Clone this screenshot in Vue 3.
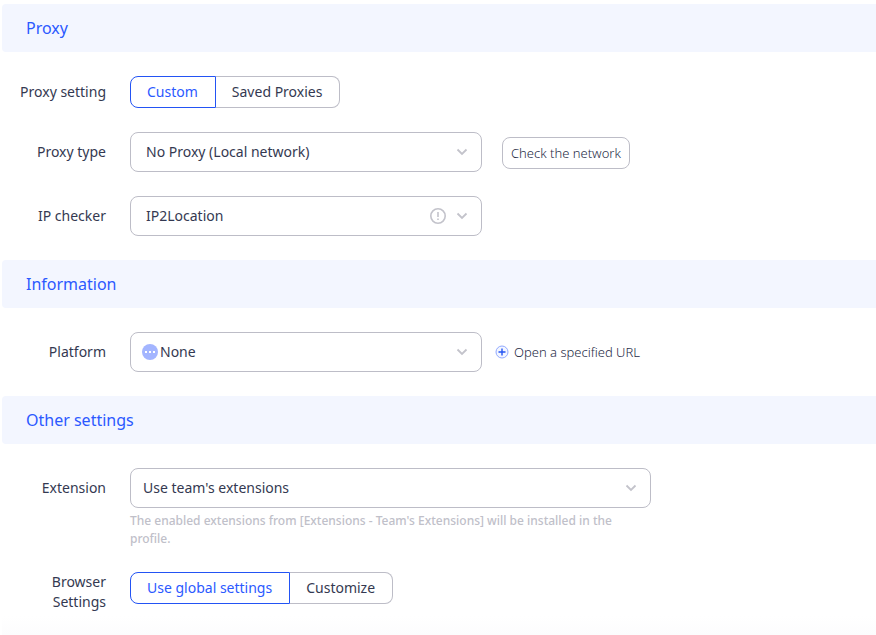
<script setup>
import { ref } from 'vue'

const proxySetting = ref('Custom')
const proxyType = ref('none')
const ipChecker = ref('ip2location')
const platform = ref('none')
const extension = ref('team')
const browserSettings = ref('Use global settings')
</script>

<template>
  <form class="page" @submit.prevent>
    <section class="section">
      <h2 class="title">Proxy</h2>
      <div class="row">
        <span id="proxy-setting" class="label">Proxy setting</span>
        <div class="segments" role="radiogroup" aria-labelledby="proxy-setting">
          <label v-for="item in ['Custom', 'Saved Proxies']" :key="item" class="segment">
            <input v-model="proxySetting" type="radio" name="proxy-setting" :value="item" />
            <span>{{ item }}</span>
          </label>
        </div>
      </div>
      <div class="row">
        <label class="label tall" for="proxy-type">Proxy type</label>
        <div class="field">
          <select id="proxy-type" v-model="proxyType">
            <option value="none">No Proxy (Local network)</option>
          </select>
          <svg class="chevron" viewBox="0 0 12 12"><path d="M1.500 3.500 6 8l4.500-4.500" /></svg>
        </div>
        <button class="check" type="button">Check the network</button>
      </div>
      <div class="row">
        <label class="label tall" for="ip-checker">IP checker</label>
        <div class="field">
          <select id="ip-checker" v-model="ipChecker">
            <option value="ip2location">IP2Location</option>
          </select>
          <svg class="warning" viewBox="0 0 16 16">
            <circle cx="8" cy="8" r="7.200" />
            <path d="M8 4v5M8 10.500v1.500" />
          </svg>
          <svg class="chevron" viewBox="0 0 12 12"><path d="M1.500 3.500 6 8l4.500-4.500" /></svg>
        </div>
      </div>
    </section>

    <section class="section">
      <h2 class="title">Information</h2>
      <div class="row">
        <label class="label tall" for="platform">Platform</label>
        <div class="field with-icon">
          <select id="platform" v-model="platform">
            <option value="none">None</option>
          </select>
          <svg class="dots" viewBox="0 0 16 16">
            <circle cx="8" cy="8" r="8" />
            <path d="M3 7h2v2H3zM7 7h2v2H7zM11 7h2v2h-2z" />
          </svg>
          <svg class="chevron" viewBox="0 0 12 12"><path d="M1.500 3.500 6 8l4.500-4.500" /></svg>
        </div>
        <button class="open-url" type="button">
          <svg viewBox="0 0 14 14">
            <circle cx="7" cy="7" r="6" />
            <path d="M7 3.500v7M3.500 7h7" />
          </svg>
          Open a specified URL
        </button>
      </div>
    </section>

    <section class="section">
      <h2 class="title">Other settings</h2>
      <div class="row">
        <label class="label tall" for="extension">Extension</label>
        <div class="stack">
          <div class="field wide">
            <select id="extension" v-model="extension">
              <option value="team">Use team's extensions</option>
            </select>
            <svg class="chevron" viewBox="0 0 12 12"><path d="M1.500 3.500 6 8l4.500-4.500" /></svg>
          </div>
          <p class="hint">The enabled extensions from [Extensions - Team's Extensions] will be installed in the profile.</p>
        </div>
      </div>
      <div class="row">
        <span id="browser-settings" class="label double">Browser Settings</span>
        <div class="segments" role="radiogroup" aria-labelledby="browser-settings">
          <label v-for="item in ['Use global settings', 'Customize']" :key="item" class="segment">
            <input v-model="browserSettings" type="radio" name="browser-settings" :value="item" />
            <span>{{ item }}</span>
          </label>
        </div>
      </div>
    </section>
    <div class="shade"></div>
  </form>
</template>

<style>
body {
  margin: 0;
  background: #fff;
}
</style>

<style scoped>
.page {
  padding: 4px 0 0 2px;
  color: #343951;
  font-family: "Noto Sans", "Open Sans", sans-serif;
  font-size: 14px;
  line-height: 20px;
}
.section {
  display: flex;
  flex-direction: column;
  gap: 24px;
  margin-bottom: 24px;
}
.section:last-of-type {
  margin-bottom: 4px;
}
.title {
  margin: 0;
  padding: 0 24px;
  border-radius: 4px 0 0 4px;
  background: #f3f6ff;
  color: #2b59ff;
  font-size: 16px;
  font-weight: 400;
  line-height: 48px;
}
.row {
  display: flex;
  align-items: flex-start;
}
.label {
  box-sizing: border-box;
  flex: none;
  width: 104px;
  margin-right: 24px;
  text-align: right;
  line-height: 32px;
}
.label.tall {
  line-height: 40px;
}
.label.double {
  padding-left: 40px;
  line-height: 20px;
}
.segments {
  display: flex;
}
.segment {
  position: relative;
  cursor: pointer;
}
.segment input {
  position: absolute;
  inset: 0;
  margin: 0;
  opacity: 0;
}
.segment span {
  display: block;
  padding: 0 17px 0 16px;
  border: 1px solid #bdbdc7;
  line-height: 30px;
}
.segment:first-child span {
  border-radius: 8px 0 0 8px;
}
.segment:last-child span {
  border-left: 0;
  border-radius: 0 8px 8px 0;
}
.segment input:checked + span {
  border-color: #2354f4;
  color: #2b59ff;
}
.field {
  display: flex;
  position: relative;
  flex: 0 1 352px;
}
select {
  width: 100%;
  height: 40px;
  padding: 0 40px 0 15px;
  border: 1px solid #bdbdc7;
  border-radius: 8px;
  background: #fff;
  color: inherit;
  font: inherit;
  appearance: none;
}
.with-icon select {
  padding-left: 29px;
}
.wide select {
  padding-left: 12px;
}
.chevron,
.warning,
.dots {
  position: absolute;
  pointer-events: none;
}
.chevron {
  top: 14px;
  right: 14px;
  width: 12px;
  height: 12px;
  fill: none;
  stroke: #c3c3cb;
  stroke-width: 1.8;
}
.warning {
  top: 12px;
  right: 36px;
  width: 16px;
  height: 16px;
  fill: none;
  stroke: #c3c3cb;
  stroke-width: 1.6;
}
.dots {
  top: 12px;
  left: 12px;
  width: 16px;
  height: 16px;
  fill: #a3b5ff;
}
.dots path {
  fill: #fff;
}
button {
  align-self: center;
  border: 0;
  background: none;
  color: #272c47;
  font-family: "Noto Sans", sans-serif;
  font-size: 13px;
  font-weight: 300;
  line-height: 20px;
  white-space: nowrap;
}
.check {
  margin: 2px 0 0 20px;
  padding: 5px 8px;
  border: 1px solid #bdbdc7;
  border-radius: 8px;
}
.open-url {
  display: flex;
  align-items: center;
  gap: 5px;
  margin-left: 13px;
  padding: 0;
}
.open-url svg {
  width: 14px;
  height: 14px;
  fill: #f3f6ff;
  stroke: #91a9ff;
}
.open-url path {
  stroke: #2354f4;
  stroke-width: 1.4;
}
.stack {
  flex: 0 1 521px;
}
.hint {
  margin: 4px 0 0;
  color: #c0c0c9;
  font-size: 12px;
  font-weight: 500;
  line-height: 18px;
}
.shade {
  height: 19px;
  background: linear-gradient(#fff, #fcfcfd);
}
</style>
